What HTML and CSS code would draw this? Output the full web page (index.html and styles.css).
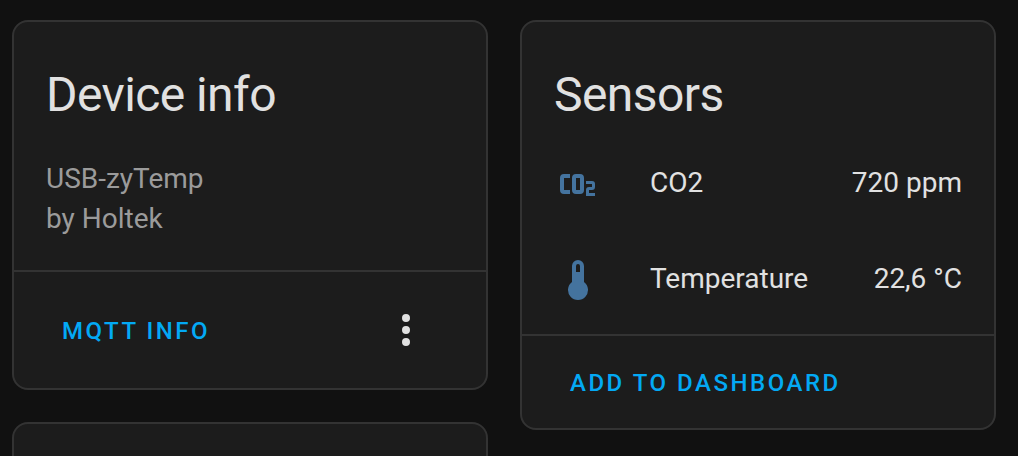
FILE: index.html
```html
<!DOCTYPE html>
<html lang="en">
<head>
  <meta charset="utf-8">
  <meta name="viewport" content="width=device-width, initial-scale=1">
  <title>Device info</title>
  <link rel="stylesheet" href="styles.css">
</head>
<body>
  <main class="page">
    <div class="column">
      <section class="card">
        <h1 class="card-title">Device info</h1>
        <div class="device">
          <div>USB-zyTemp</div>
          <div>by Holtek</div>
        </div>
        <footer class="actions">
          <button class="action" type="button">MQTT INFO</button>
          <button class="menu" type="button" aria-label="More options">
            <svg class="icon" viewBox="0 0 24 24" aria-hidden="true"><path d="M12,16A2,2 0 0,1 14,18A2,2 0 0,1 12,20A2,2 0 0,1 10,18A2,2 0 0,1 12,16M12,10A2,2 0 0,1 14,12A2,2 0 0,1 12,14A2,2 0 0,1 10,12A2,2 0 0,1 12,10M12,4A2,2 0 0,1 14,6A2,2 0 0,1 12,8A2,2 0 0,1 10,6A2,2 0 0,1 12,4Z"/></svg>
          </button>
        </footer>
      </section>
      <section class="card card-empty"></section>
    </div>
    <div class="column">
      <section class="card">
        <h1 class="card-title">Sensors</h1>
        <div class="sensors">
          <div class="sensor">
            <svg class="icon sensor-icon" viewBox="0 0 24 24" aria-hidden="true"><path d="M5,7A2,2 0 0,0 3,9V15A2,2 0 0,0 5,17H8V15H5V9H8V7H5M11,7A2,2 0 0,0 9,9V15A2,2 0 0,0 11,17H13A2,2 0 0,0 15,15V9A2,2 0 0,0 13,7H11M11,9H13V15H11V9M16,10.5V12H19V13.5H17.5A1.5,1.5 0 0,0 16,15V18H20.5V16.5H17.5V15H19A1.5,1.5 0 0,0 20.5,13.5V12A1.5,1.5 0 0,0 19,10.5H16Z"/></svg>
            <span class="sensor-name">CO2</span>
            <span class="sensor-value">720 ppm</span>
          </div>
          <div class="sensor">
            <svg class="icon sensor-icon" viewBox="0 0 24 24" aria-hidden="true"><path d="M15,13V5A3,3 0 0,0 9,5V13A5,5 0 1,0 15,13M12,4A1,1 0 0,1 13,5V8H11V5A1,1 0 0,1 12,4Z"/></svg>
            <span class="sensor-name">Temperature</span>
            <span class="sensor-value">22,6 °C</span>
          </div>
        </div>
        <footer class="actions">
          <button class="action" type="button">ADD TO DASHBOARD</button>
        </footer>
      </section>
    </div>
  </main>
</body>
</html>
```

FILE: styles.css
```css
* {
  box-sizing: border-box;
}

body {
  margin: 0;
  background: #111111;
  color: #e1e1e1;
  font: 400 28px/40px Roboto, "Liberation Sans", sans-serif;
}

.page {
  display: grid;
  grid-template-columns: 1fr 1fr;
  gap: 32px;
  height: 100vh;
  padding: 20px 22px 0 12px;
  overflow: hidden;
}

.column {
  display: flex;
  flex-direction: column;
  gap: 32px;
}

.card {
  flex: none;
  border: 2px solid #333333;
  border-radius: 16px;
  background: #1c1c1c;
}

.card-empty {
  min-height: 160px;
}

.card-title {
  margin: 0;
  padding: 25px 32px 0;
  font-size: 48px;
  font-weight: 400;
  line-height: 96px;
  letter-spacing: -0.012em;
}

.device {
  padding: 16px 32px 31px;
  color: #9b9b9b;
}

.sensors {
  display: grid;
  gap: 16px;
  padding: 0 32px 15px;
}

.sensor {
  display: flex;
  align-items: center;
  gap: 48px;
  height: 80px;
}

.icon {
  display: block;
  flex: none;
  width: 48px;
  height: 48px;
  fill: currentColor;
}

.sensor-icon {
  margin-top: 2px;
  color: #44739e;
}

.sensor-name {
  flex: 1;
}

.actions {
  display: flex;
  align-items: center;
  justify-content: space-between;
  padding: 10px 32px;
  border-top: 2px solid #333333;
}

.action {
  height: 72px;
  padding: 2px 16px 0;
  border: 0;
  background: none;
  color: #03a9f4;
  font: inherit;
  font-size: 24px;
  font-weight: 500;
  letter-spacing: 0.105em;
  cursor: pointer;
}

.menu {
  padding: 24px;
  border: 0;
  background: none;
  color: inherit;
  cursor: pointer;
}
```
